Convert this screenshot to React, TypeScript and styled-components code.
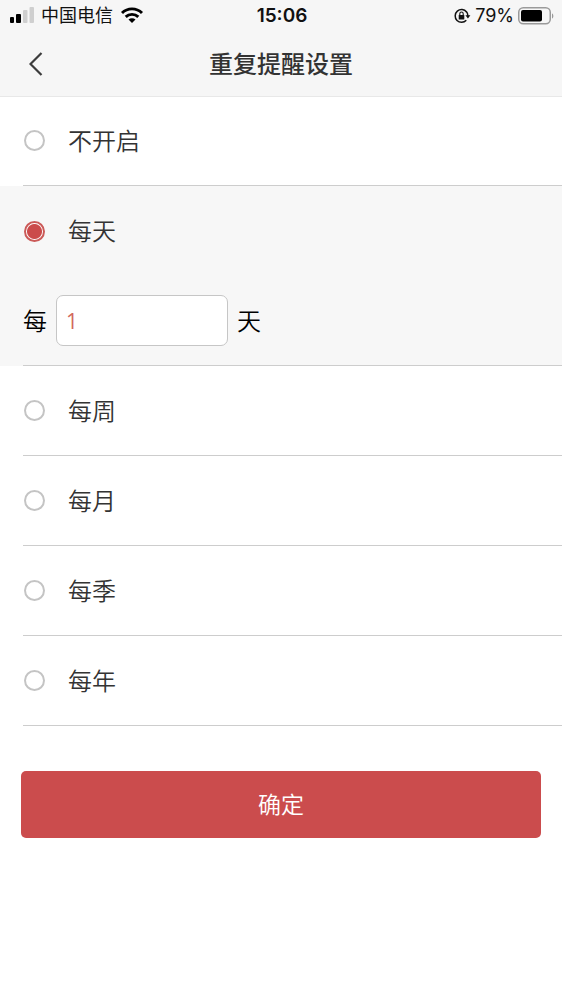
import React, { useState } from "react";
import styled, { createGlobalStyle } from "styled-components";

const GlobalStyle = createGlobalStyle`
  * { box-sizing: border-box; }
  body {
    margin: 0;
    background: #fff;
    color: #333;
    font-family: Inter, "Noto Sans CJK SC", sans-serif;
    font-size: 24px;
    font-weight: 350;
    line-height: 32px;
  }
  button, input { font: inherit; }
`;

const Page = styled.div`
  min-height: 100vh;
`;

const Header = styled.header`
  background: #f6f6f6;
  box-shadow: 0 1px 0 #e8e8e8;
`;

const StatusBar = styled.div`
  display: grid;
  grid-template-columns: 1fr auto 1fr;
  align-items: center;
  height: 31px;
  padding: 0 8px 0 10px;
  color: #111;
  font-size: 18px;
  font-weight: 400;
  line-height: 24px;
`;

const StatusGroup = styled.div<{ $end?: boolean }>`
  display: flex;
  align-items: center;
  justify-content: ${(p) => (p.$end ? "flex-end" : "flex-start")};
  gap: ${(p) => (p.$end ? 4 : 7)}px;
`;

const Clock = styled.time`
  font-size: 19px;
  font-weight: 600;
`;

const NavBar = styled.div`
  display: grid;
  grid-template-columns: 72px 1fr 72px;
  align-items: center;
  height: 65px;
`;

const BackButton = styled.button`
  display: flex;
  align-items: center;
  justify-content: center;
  height: 48px;
  padding: 0;
  border: 0;
  background: none;
  color: #3c3c3c;
`;

const Title = styled.h1`
  margin: 0;
  padding-top: 2px;
  font-size: 24px;
  font-weight: 500;
  text-align: center;
`;

const Options = styled.div`
  display: flex;
  flex-direction: column;
`;

const Option = styled.div<{ $selected: boolean }>`
  padding-left: 23px;
  background: ${(p) => (p.$selected ? "#f7f7f7" : "transparent")};
`;

const OptionBody = styled.div`
  border-bottom: 1px solid #cdcdcd;
`;

const OptionLabel = styled.label<{ $expanded: boolean }>`
  display: flex;
  align-items: center;
  gap: 23px;
  height: ${(p) => (p.$expanded ? 90 : 89)}px;
  padding-left: 1px;
`;

const RowText = styled.span`
  padding-top: 2px;
`;

const Radio = styled.input`
  appearance: none;
  flex: none;
  width: 21px;
  height: 21px;
  margin: 0;
  border: 2px solid #c4c4c4;
  border-radius: 50%;
  background: #fff;

  &:checked {
    border-color: #cb5a58;
    background: radial-gradient(circle, #cb4b4b 7px, #fff 8px);
  }
`;

const Interval = styled.div`
  display: flex;
  align-items: center;
  gap: 9px;
  height: 89px;
  color: #000;
`;

const IntervalInput = styled.input`
  width: 172px;
  height: 51px;
  padding: 0 9px;
  border: 1px solid #c6c6c6;
  border-radius: 7px;
  background: #fff;
  color: #d2685c;
  font-family: "Open Sans", sans-serif;
  font-size: 21px;
  font-weight: 400;
`;

const Actions = styled.div`
  padding: 45px 21px;
`;

const ConfirmButton = styled.button`
  display: block;
  width: 100%;
  height: 67px;
  padding: 0;
  border: 0;
  border-radius: 5px;
  background: #cb4c4d;
  color: #fff;
  font-size: 23px;
`;

const SignalIcon = () => (
  <svg width="24" height="17" viewBox="0 0 24 17" aria-hidden="true">
    <rect x="0" y="10" width="4" height="6" rx="1" fill="#000" />
    <rect x="6" y="7" width="5" height="9" rx="1" fill="#000" />
    <rect x="13" y="3" width="4.500" height="13" rx="1" fill="#cfcfcf" />
    <rect x="19.500" y="0" width="4.500" height="16" rx="1" fill="#cfcfcf" />
  </svg>
);

const WifiIcon = () => (
  <svg width="24" height="17" viewBox="-1 0 24 17" aria-hidden="true">
    <g fill="none" stroke="#000" strokeWidth="2.9">
      <path d="M1 6 A14.2 14.2 0 0 1 21 6" />
      <path d="M4.700 9.900 A9 9 0 0 1 17.300 9.900" />
    </g>
    <path d="M11 16 L7.500 12.600 A5 5 0 0 1 14.500 12.600 Z" fill="#000" />
  </svg>
);

const RotationLockIcon = () => (
  <svg width="17" height="16" viewBox="0 0 17 16" aria-hidden="true">
    <path
      d="M12.600 4 A6.400 6.400 0 1 0 12.300 12.300"
      fill="none"
      stroke="#111"
      strokeWidth="1.500"
    />
    <path d="M12.300 3.600 A6.400 6.400 0 0 1 13.900 8" fill="none" stroke="#111" strokeWidth="1.500" />
    <path d="M11.400 7.200 H16.400 L13.900 10.400 Z" fill="#111" />
    <rect x="4.700" y="7" width="5.600" height="4.500" rx="0.600" fill="#111" />
    <path d="M5.800 7 V5.700 a1.700 1.700 0 0 1 3.400 0 V7" fill="none" stroke="#111" strokeWidth="1.100" />
  </svg>
);

const BatteryIcon = () => (
  <svg width="36" height="18" viewBox="0 0 36 18" aria-hidden="true">
    <rect x="0.750" y="0.750" width="31.500" height="16" rx="4.500" fill="none" stroke="#9a9a9a" strokeWidth="1.500" />
    <rect x="3" y="3" width="21" height="11.500" rx="2" fill="#000" />
    <path d="M34 6.500 c1.800 0.600 1.800 4.400 0 5 Z" fill="#9a9a9a" />
  </svg>
);

const BackIcon = () => (
  <svg width="14" height="24" viewBox="0 0 14 24" aria-hidden="true">
    <path d="M12.500 1 L1.500 12 L12.500 23" fill="none" stroke="currentColor" strokeWidth="2.200" />
  </svg>
);

const OPTIONS = ["不开启", "每天", "每周", "每月", "每季", "每年"];

const UNITS: Record<string, string> = {
  每天: "天",
};

export default function App() {
  const [selected, setSelected] = useState("每天");
  const [interval, setIntervalValue] = useState("1");

  return (
    <Page>
      <GlobalStyle />
      <Header>
        <StatusBar>
          <StatusGroup>
            <SignalIcon />
            <span>中国电信</span>
            <WifiIcon />
          </StatusGroup>
          <Clock>15:06</Clock>
          <StatusGroup $end>
            <RotationLockIcon />
            <span>79%</span>
            <BatteryIcon />
          </StatusGroup>
        </StatusBar>
        <NavBar>
          <BackButton type="button" aria-label="返回">
            <BackIcon />
          </BackButton>
          <Title>重复提醒设置</Title>
        </NavBar>
      </Header>
      <main>
        <Options role="radiogroup" aria-label="重复提醒设置">
          {OPTIONS.map((name) => {
            const active = name === selected;
            const unit = active ? UNITS[name] : undefined;
            return (
              <Option key={name} $selected={active}>
                <OptionBody>
                  <OptionLabel $expanded={Boolean(unit)}>
                    <Radio
                      type="radio"
                      name="repeat"
                      checked={active}
                      onChange={() => setSelected(name)}
                    />
                    <RowText>{name}</RowText>
                  </OptionLabel>
                  {unit && (
                    <Interval>
                      <RowText as="label" htmlFor="interval">
                        每
                      </RowText>
                      <IntervalInput
                        id="interval"
                        inputMode="numeric"
                        value={interval}
                        onChange={(e) => setIntervalValue(e.target.value)}
                      />
                      <RowText>{unit}</RowText>
                    </Interval>
                  )}
                </OptionBody>
              </Option>
            );
          })}
        </Options>
        <Actions>
          <ConfirmButton type="button">确定</ConfirmButton>
        </Actions>
      </main>
    </Page>
  );
}
